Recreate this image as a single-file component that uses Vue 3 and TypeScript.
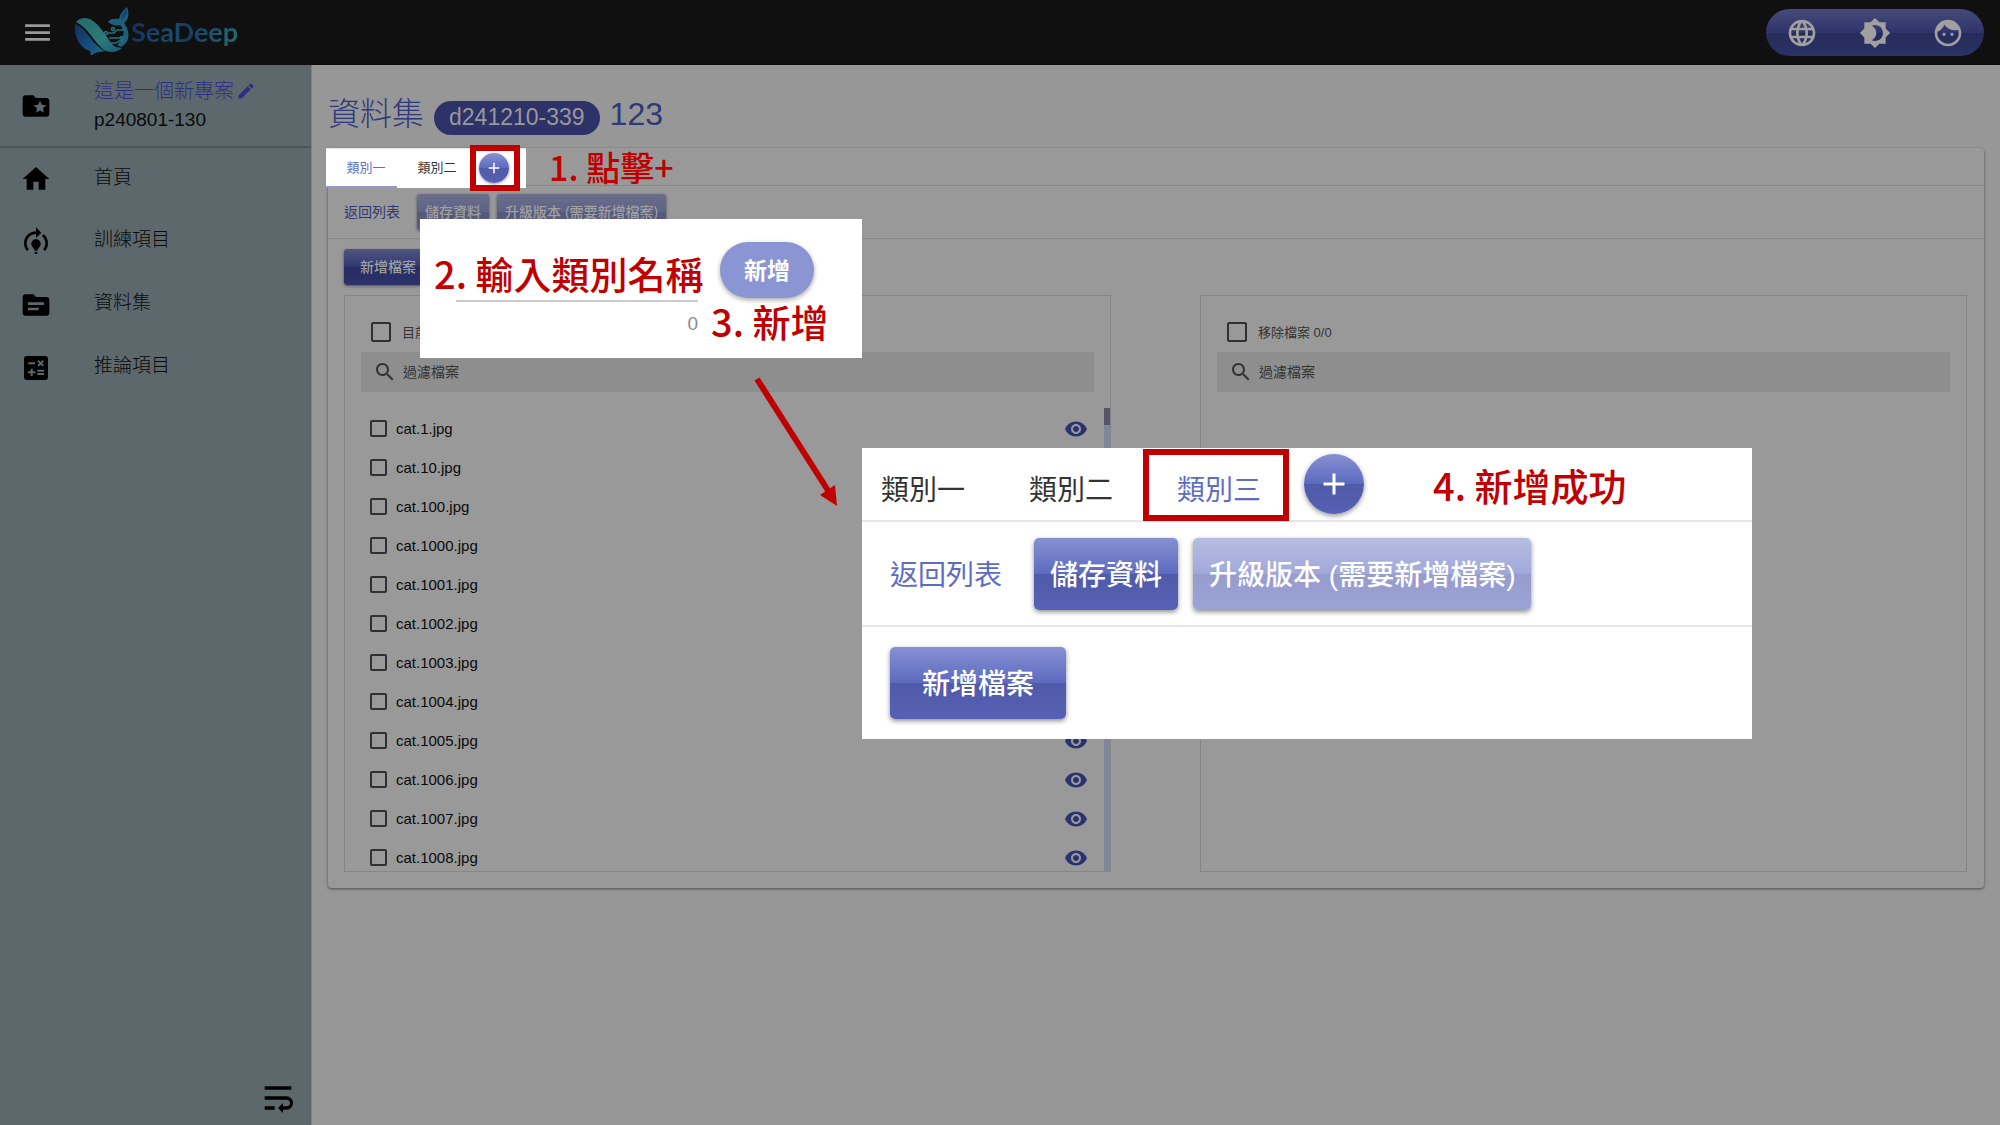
<script setup lang="ts">
import { ref } from 'vue'

interface NavItem {
  label: string
  icon: string
}

const folderPath = 'M20 6h-8l-2-2H4c-1.1 0-1.99.9-1.99 2L2 18c0 1.1.9 2 2 2h16c1.1 0 2-.9 2-2V8c0-1.1-.9-2-2-2z'

const icons = {
  menu: 'M3 18h18v-2H3v2zm0-5h18v-2H3v2zm0-7v2h18V6H3z',
  project: folderPath + 'm-2.06 11L15 15.28 12.06 17l.78-3.33-2.59-2.24 3.41-.29L15 8l1.34 3.14 3.41.29-2.59 2.24.78 3.33z',
  edit: 'M3 17.25V21h3.75L17.81 9.94l-3.75-3.75L3 17.25zM20.71 7.04c.39-.39.39-1.02 0-1.41l-2.34-2.34c-.39-.39-1.02-.39-1.41 0l-1.83 1.83 3.75 3.75 1.83-1.83z',
  language: 'M11.99 2C6.47 2 2 6.48 2 12s4.47 10 9.99 10C17.52 22 22 17.52 22 12S17.52 2 11.99 2zm6.93 6h-2.95c-.32-1.25-.78-2.45-1.38-3.56 1.84.63 3.37 1.91 4.33 3.56zM12 4.04c.83 1.2 1.48 2.53 1.91 3.96h-3.82c.43-1.43 1.08-2.76 1.91-3.96zM4.26 14C4.1 13.36 4 12.69 4 12s.1-1.36.26-2h3.38c-.08.66-.14 1.32-.14 2 0 .68.06 1.34.14 2H4.26zm.82 2h2.95c.32 1.25.78 2.45 1.38 3.56-1.84-.63-3.37-1.9-4.33-3.56zm2.95-8H5.08c.96-1.66 2.49-2.93 4.33-3.56C8.81 5.55 8.35 6.75 8.03 8zM12 19.96c-.83-1.2-1.48-2.53-1.91-3.96h3.82c-.43 1.43-1.08 2.76-1.91 3.96zM14.34 14H9.66c-.09-.66-.16-1.32-.16-2 0-.68.07-1.35.16-2h4.68c.09.65.16 1.32.16 2 0 .68-.07 1.34-.16 2zm.25 5.56c.6-1.11 1.06-2.31 1.38-3.56h2.95c-.96 1.65-2.49 2.93-4.33 3.56zM16.36 14c.08-.66.14-1.32.14-2 0-.68-.06-1.34-.14-2h3.38c.16.64.26 1.31.26 2s-.1 1.36-.26 2h-3.38z',
  theme: 'M20 8.69V4h-4.69L12 .69 8.69 4H4v4.69L.69 12 4 15.31V20h4.69L12 23.31 15.31 20H20v-4.69L23.31 12 20 8.69zM12 18c-.89 0-1.74-.2-2.5-.55C11.56 16.5 13 14.42 13 12s-1.44-4.5-3.5-5.45C10.26 6.2 11.11 6 12 6c3.31 0 6 2.69 6 6s-2.69 6-6 6z',
  face: 'M9 11.75c-.69 0-1.25.56-1.25 1.25s.56 1.25 1.25 1.25 1.25-.56 1.25-1.25-.56-1.25-1.25-1.25zm6 0c-.69 0-1.25.56-1.25 1.25s.56 1.25 1.25 1.25 1.25-.56 1.25-1.25-.56-1.25-1.25-1.25zM12 2C6.48 2 2 6.48 2 12s4.48 10 10 10 10-4.48 10-10S17.52 2 12 2zm0 18c-4.41 0-8-3.59-8-8 0-.29.02-.58.05-.86 2.36-1.05 4.23-2.98 5.21-5.37C11.07 8.33 14.05 10 17.42 10c.78 0 1.53-.09 2.25-.26.21.71.33 1.47.33 2.26 0 4.41-3.59 8-8 8z',
  eye: 'M12 4.5C7 4.5 2.73 7.61 1 12c1.73 4.39 6 7.5 11 7.5s9.27-3.11 11-7.5c-1.73-4.39-6-7.5-11-7.5zM12 17c-2.76 0-5-2.24-5-5s2.24-5 5-5 5 2.24 5 5-2.24 5-5 5zm0-8c-1.66 0-3 1.34-3 3s1.34 3 3 3 3-1.34 3-3-1.34-3-3-3z',
  search: 'M15.5 14h-.79l-.28-.27C15.41 12.59 16 11.11 16 9.5 16 5.91 13.09 3 9.5 3S3 5.91 3 9.5 5.91 16 9.5 16c1.61 0 3.09-.59 4.23-1.57l.27.28v.79l5 4.99L20.49 19l-4.99-5zm-6 0C7.01 14 5 11.99 5 9.5S7.01 5 9.5 5 14 7.01 14 9.5 11.99 14 9.5 14z',
  collapse: 'M4 19h6v-2H4v2zM20 5H4v2h16V5zm-3 6H4v2h13.25c1.1 0 2 .9 2 2s-.9 2-2 2H15v-2l-3 3 3 3v-2h2c2.21 0 4-1.79 4-4s-1.79-4-4-4z',
  plus: 'M19 13h-6v6h-2v-6H5v-2h6V5h2v6h6v2z',
}

const navItems: NavItem[] = [
  { label: '首頁', icon: 'M10 20v-6h4v6h5v-8h3L12 3 2 12h3v8z' },
  {
    label: '訓練項目',
    icon: 'M15.5 13.5c0 2-2.5 3.5-2.5 5h-2c0-1.5-2.5-3-2.5-5 0-1.93 1.57-3.5 3.5-3.5s3.5 1.57 3.5 3.5zm-2.5 6h-2V21h2v-1.5zm6-6.5c0 1.68-.59 3.21-1.58 4.42l1.42 1.42C20.18 17.27 21 15.23 21 13c0-2.74-1.23-5.19-3.16-6.84l-1.42 1.42C17.99 8.86 19 10.82 19 13zm-3-8l-4-4v3c-4.97 0-9 4.03-9 9 0 2.23.82 4.27 2.16 5.84l1.42-1.42C5.59 16.21 5 14.68 5 13c0-3.86 3.14-7 7-7v3l4-4z',
  },
  { label: '資料集', icon: folderPath + 'm-6 10H6v-2h8v2zm4-4H6v-2h12v2z' },
  {
    label: '推論項目',
    icon: 'M19 3H5c-1.1 0-2 .9-2 2v14c0 1.1.9 2 2 2h14c1.1 0 2-.9 2-2V5c0-1.1-.9-2-2-2zm-5.97 4.06L14.09 6l1.41 1.41L16.91 6l1.06 1.06-1.41 1.41 1.41 1.41-1.06 1.06-1.41-1.4-1.41 1.41-1.06-1.06 1.41-1.41-1.41-1.42zm-6.78.66h5v1.5h-5v-1.5zM11.5 16h-2v2H8v-2H6v-1.5h2v-2h1.5v2h2V16zm6.5 1.25h-5v-1.5h5v1.5zm0-2.5h-5v-1.5h5v1.5z',
  },
]

const files: string[] = [1, 10, 100, 1000, 1001, 1002, 1003, 1004, 1005, 1006, 1007, 1008].map((n) => `cat.${n}.jpg`)
const picked = ref<string[]>([])
const newCategory = ref('')
</script>

<template>
  <div class="app">
    <header class="topbar">
      <button class="icon-btn menu" type="button" aria-label="選單">
        <svg viewBox="0 0 24 24"><path :d="icons.menu" /></svg>
      </button>
      <a class="logo" href="#">
        <svg class="whale" viewBox="0 0 56 50" aria-hidden="true">
          <defs>
            <linearGradient id="back" x1="0" y1="0" x2="1" y2="1">
              <stop offset="0" stop-color="#24696d" />
              <stop offset="0.6" stop-color="#2b7a78" />
              <stop offset="1" stop-color="#1a5878" />
            </linearGradient>
            <linearGradient id="belly" x1="0" y1="0" x2="1" y2="1">
              <stop offset="0" stop-color="#12305f" />
              <stop offset="0.6" stop-color="#174e7f" />
              <stop offset="1" stop-color="#22707f" />
            </linearGradient>
          </defs>
          <path fill="url(#back)" d="M1 17C5 12 13 12 18 16c9 6 14 18 21 25 3 2 5 1 8 2-4 4-11 5-16 3C21 41 15 24 1 17z" />
          <path fill="url(#belly)" d="M0 19c12 4 17 21 30 27-4 1-7 1-10 2l-4 3-1-5C4 43-1 31 0 19z" />
          <path fill="#1c6079" d="M33 17c1-3 6-4 11-3 1-5 4-9 8-12 3 7 1 13-3 16 6 8 7 19-3 24l-4-2c7-7 9-13 3-20-5 1-8 0-12-3z" />
          <path fill="#164476" d="M46 15c0-5 2-9 6-12 1 5 0 9-6 12z" />
          <g fill="none" stroke="#23717d" stroke-width="1.500">
            <path d="M32 28h7l3-3h6M34 33h13M36 38h5l3-2h4" />
            <circle cx="31" cy="28" r="1.500" /><circle cx="47" cy="33" r="1.500" /><circle cx="38" cy="24" r="1.500" />
          </g>
        </svg>
        <span class="brand">SeaDeep</span>
      </a>
      <div class="tools">
        <button class="icon-btn" type="button" aria-label="語言"><svg viewBox="0 0 24 24"><path :d="icons.language" /></svg></button>
        <button class="icon-btn" type="button" aria-label="主題"><svg viewBox="0 0 24 24"><path :d="icons.theme" /></svg></button>
        <button class="icon-btn" type="button" aria-label="帳號"><svg viewBox="0 0 24 24"><path :d="icons.face" /></svg></button>
      </div>
    </header>

    <div class="body">
      <aside class="sidebar">
        <div class="project">
          <svg class="side-icon" viewBox="0 0 24 24"><path :d="icons.project" /></svg>
          <div class="project-text">
            <a class="project-name" href="#">這是一個新專案<svg viewBox="0 0 24 24"><path :d="icons.edit" /></svg></a>
            <span class="project-id">p240801-130</span>
          </div>
        </div>
        <nav>
          <a v-for="item in navItems" :key="item.label" class="nav-item" href="#">
            <svg class="side-icon" viewBox="0 0 24 24"><path :d="item.icon" /></svg>
            <span>{{ item.label }}</span>
          </a>
        </nav>
        <button class="icon-btn collapse" type="button" aria-label="收合">
          <svg viewBox="0 0 24 24"><path :d="icons.collapse" /></svg>
        </button>
      </aside>

      <main class="main">
        <h1 class="title">
          <span>資料集</span>
          <span class="chip">d241210-339</span>
          <span>123</span>
        </h1>

        <section class="card">
          <div class="tab-row">
            <div class="tabs spotlight" role="tablist">
              <button class="tab active" type="button" role="tab" aria-selected="true">類別一</button>
              <button class="tab" type="button" role="tab" aria-selected="false">類別二</button>
              <span class="add-wrap">
                <button class="round" type="button" aria-label="新增類別"><svg viewBox="0 0 24 24"><path :d="icons.plus" /></svg></button>
              </span>
            </div>
          </div>

          <div class="action-row">
            <a class="back" href="#">返回列表</a>
            <button class="btn dim-disabled" type="button" disabled>儲存資料</button>
            <button class="btn dim-disabled" type="button" disabled>升級版本 (需要新增檔案)</button>
          </div>

          <div class="content">
            <button class="btn dim wide" type="button">新增檔案</button>
            <div class="panels">
              <div class="panel">
                <label class="panel-head"><input class="check big" type="checkbox" /><span>目前檔案</span></label>
                <label class="search">
                  <svg viewBox="0 0 24 24"><path :d="icons.search" /></svg>
                  <input type="text" placeholder="過濾檔案" aria-label="過濾檔案" />
                </label>
                <div class="list-wrap">
                  <ul class="list">
                    <li v-for="file in files" :key="file">
                      <label><input v-model="picked" class="check" type="checkbox" :value="file" />{{ file }}</label>
                      <button class="icon-btn eye" type="button" :aria-label="`檢視 ${file}`">
                        <svg viewBox="0 0 24 24"><path :d="icons.eye" /></svg>
                      </button>
                    </li>
                  </ul>
                  <div class="scrollbar"><div class="thumb"></div></div>
                </div>
              </div>
              <div class="panel">
                <label class="panel-head"><input class="check big" type="checkbox" /><span>移除檔案 0/0</span></label>
                <label class="search">
                  <svg viewBox="0 0 24 24"><path :d="icons.search" /></svg>
                  <input type="text" placeholder="過濾檔案" aria-label="過濾檔案" />
                </label>
              </div>
            </div>
          </div>
        </section>
      </main>
    </div>

    <!-- Tutorial callouts floating over the dimmed page -->
    <p class="note note-1">1. 點擊+</p>

    <section class="popup">
      <div class="field">
        <input v-model="newCategory" type="text" aria-label="類別名稱" />
        <span class="count">{{ newCategory.length }}</span>
      </div>
      <button class="add-btn" type="button">新增</button>
      <p class="note note-2">2. 輸入類別名稱</p>
      <p class="note note-3">3. 新增</p>
    </section>

    <svg class="arrow" viewBox="0 0 90 132" aria-hidden="true">
      <path d="M4 4 76 117" fill="none" stroke="#c00000" stroke-width="6" />
      <path d="M84 131 67 120 82 110z" fill="#c00000" />
    </svg>

    <section class="result">
      <div class="result-tabs" role="tablist">
        <button class="tab" type="button" role="tab" aria-selected="false">類別一</button>
        <button class="tab" type="button" role="tab" aria-selected="false">類別二</button>
        <button class="tab active framed" type="button" role="tab" aria-selected="true">類別三</button>
        <button class="round" type="button" aria-label="新增類別"><svg viewBox="0 0 24 24"><path :d="icons.plus" /></svg></button>
        <p class="note note-4">4. 新增成功</p>
      </div>
      <div class="result-actions">
        <a class="back" href="#">返回列表</a>
        <button class="btn" type="button">儲存資料</button>
        <button class="btn faded" type="button" disabled>升級版本 (需要新增檔案)</button>
      </div>
      <div class="result-files">
        <button class="btn wide" type="button">新增檔案</button>
      </div>
    </section>
  </div>
</template>

<style>
body {
  margin: 0;
  background: #979797;
}
</style>

<style scoped>
.app {
  position: relative;
  display: flex;
  flex-direction: column;
  min-height: 100vh;
  overflow: hidden;
  background: #979797;
  font-family: "Liberation Sans", "Noto Sans CJK TC", sans-serif;
  color: #0a0a0a;
}
.app * {
  box-sizing: border-box;
}
svg {
  display: block;
  flex: none;
}
button,
input {
  font-family: inherit;
  margin: 0;
}
button {
  padding: 0;
  border: 0;
  background: none;
  white-space: nowrap;
}
a {
  color: inherit;
  text-decoration: none;
}
.icon-btn svg {
  width: 32px;
  height: 32px;
  fill: currentColor;
}

/* Top bar */
.topbar {
  display: flex;
  align-items: center;
  height: 65px;
  padding: 0 16px 0 21px;
  background: #101010;
}
.menu {
  color: #999;
}
.menu svg {
  width: 33px;
  height: 33px;
}
.logo {
  display: flex;
  align-items: center;
  margin-left: 21px;
}
.whale {
  width: 56px;
  height: 50px;
  margin-bottom: 6px;
}
.brand {
  padding-bottom: 2px;
  font-family: Lato, sans-serif;
  font-size: 27px;
  line-height: 36px;
  font-weight: 700;
  background: linear-gradient(90deg, #142f60, #17506a 40%, #153a66 50%, #1a4e6c 70%, #24696c);
  -webkit-background-clip: text;
  background-clip: text;
  color: transparent;
}
.tools {
  display: flex;
  align-items: center;
  gap: 41px;
  height: 47px;
  margin-left: auto;
  padding: 0 20px;
  border-radius: 24px;
  background: linear-gradient(#454a79, #2f356b 50%, #262c59 50%, #2b3266);
}
.tools .icon-btn {
  color: #a0a0a0;
}

/* Sidebar */
.body {
  display: flex;
  flex: 1;
}
.sidebar {
  display: flex;
  flex-direction: column;
  width: 312px;
  flex: none;
  border-right: 1px solid #7d8285;
  background: #5d686d;
}
.side-icon {
  width: 32px;
  height: 32px;
  fill: #000;
}
.project {
  display: flex;
  align-items: center;
  gap: 42px;
  height: 83px;
  padding-left: 20px;
  border-bottom: 2px solid #4c575c;
}
.project-text {
  display: flex;
  flex-direction: column;
  gap: 1px;
  font-size: 19px;
  line-height: 28px;
}
.project-name {
  display: flex;
  align-items: center;
  gap: 2px;
  font-size: 20px;
  font-weight: 300;
  color: #2b3084;
}
.project-name svg {
  width: 20px;
  height: 20px;
  fill: currentColor;
}
.nav-item {
  display: flex;
  align-items: center;
  gap: 42px;
  height: 63px;
  padding-left: 20px;
  font-size: 19px;
  font-weight: 300;
  line-height: 28px;
}
.nav-item:first-child {
  height: 62px;
}
.nav-item span {
  padding-bottom: 3px;
}
.collapse {
  align-self: flex-end;
  margin: auto 13px 7px 0;
}
.collapse svg {
  width: 40px;
  height: 40px;
}

/* Page title */
.main {
  flex: 1;
  min-width: 0;
  padding: 25px 16px 40px;
}
.title {
  display: flex;
  align-items: center;
  gap: 10px;
  height: 48px;
  margin: 0 0 10px;
  font-size: 32px;
  line-height: 48px;
  font-weight: 300;
  color: #2f3878;
}
.chip {
  height: 34px;
  margin-top: 8px;
  padding: 0 15px;
  border-radius: 17px;
  background: #2d3268;
  color: #999;
  font-size: 23px;
  line-height: 32px;
}

/* Card */
.card {
  border-radius: 4px;
  background: #999;
  box-shadow: 0 1px 3px rgba(0, 0, 0, 0.5);
}
.tab-row {
  height: 38px;
  border-bottom: 1px solid #888;
}
.tabs {
  position: relative;
  display: flex;
  width: 200px;
  height: 40px;
  margin-left: -2px;
}
.spotlight {
  background: #fff;
  border-top: 1px solid #e4e4e4;
}
.tab {
  width: 71px;
  padding: 0 0 2px 9px;
  font-size: 13px;
  line-height: 20px;
  color: #333;
}
.tab.active {
  padding-bottom: 0;
  border-bottom: 2px solid #8f98d4;
  color: #5f6cc4;
}
.add-wrap {
  display: flex;
  align-items: center;
  justify-content: center;
  width: 50px;
  height: 46px;
  margin: -4px 0 0 2px;
  padding-right: 2px;
  border: 6px solid #c00000;
}
.round {
  display: flex;
  align-items: center;
  justify-content: center;
  flex: none;
  width: 30px;
  height: 30px;
  border-radius: 50%;
  background: linear-gradient(#8790d2, #5c6bc0 50%, #4f5aa8 50%, #5661b6);
  box-shadow: 0 1px 3px rgba(0, 0, 0, 0.4);
}
.round svg {
  width: 18px;
  height: 18px;
  fill: #fff;
}
.action-row {
  display: flex;
  align-items: center;
  gap: 8px;
  height: 53px;
  padding: 0 16px;
  border-bottom: 1px solid #888;
  font-size: 14px;
}
.back {
  margin-right: 9px;
  padding-bottom: 2px;
  color: #2f3878;
  white-space: nowrap;
}
.btn {
  height: 36px;
  padding: 0 8px 2px;
  border-radius: 3px;
  background: linear-gradient(#8790d2, #5c6bc0 50%, #4f5aa8 50%, #5661b6);
  box-shadow: 0 1px 3px rgba(0, 0, 0, 0.5);
  color: #fff;
  font-size: 14px;
  font-weight: 500;
}
.btn.wide {
  padding: 0 16px 2px;
}
.btn.dim {
  background: linear-gradient(#50567e, #2f3772 50%, #272d60 50%, #2c336c);
  color: #a0a0a0;
}
.btn.dim-disabled {
  background: linear-gradient(#6b6f88, #5c6288 50%, #54597b 50%, #5a5f83);
  color: #a0a0a0;
}
.content {
  padding: 10px 17px 16px 16px;
}
.panels {
  display: flex;
  gap: 89px;
  margin-top: 10px;
}
.panel {
  flex: 1;
  min-width: 0;
  padding-top: 26px;
  border: 1px solid #868686;
}
.panel-head {
  display: flex;
  align-items: center;
  gap: 11px;
  height: 20px;
  margin: 0 26px 10px;
  font-size: 13px;
  color: #333;
}
.panel-head span {
  padding-bottom: 2px;
}
.check {
  appearance: none;
  flex: none;
  width: 17px;
  height: 17px;
  border: 2px solid #303030;
  border-radius: 2px;
}
.check.big {
  width: 20px;
  height: 20px;
}
.search {
  display: flex;
  align-items: center;
  gap: 6px;
  height: 40px;
  margin: 0 16px;
  padding: 0 12px;
  background: #8e8e8e;
}
.search svg {
  width: 24px;
  height: 24px;
  fill: #333;
}
.search input {
  flex: 1;
  min-width: 0;
  padding: 0;
  border: 0;
  outline: 0;
  background: none;
  font-size: 14px;
}
.search input::placeholder {
  color: #333;
  opacity: 1;
}
.list-wrap {
  display: flex;
  height: 463px;
  margin-top: 16px;
  overflow: hidden;
}
.list {
  flex: 1;
  margin: 0;
  padding: 1px 16px 0 25px;
  list-style: none;
}
.list li {
  display: flex;
  align-items: center;
  justify-content: space-between;
  height: 39px;
  font-size: 15px;
}
.list label {
  display: flex;
  align-items: center;
  gap: 9px;
}
.eye {
  color: #2b3270;
}
.eye svg {
  width: 24px;
  height: 24px;
}
.scrollbar {
  width: 6px;
  background: #83859a;
}
.thumb {
  height: 17px;
  background: #555468;
}

/* Callouts */
.note {
  position: absolute;
  margin: 0;
  font-family: "Noto Sans CJK TC", sans-serif;
  font-size: 38px;
  line-height: 48px;
  font-weight: 500;
  color: #c00000;
  white-space: nowrap;
}
.note-1 {
  left: 549px;
  top: 143px;
  font-size: 34px;
}
.popup {
  position: absolute;
  left: 420px;
  top: 219px;
  display: flex;
  align-items: flex-start;
  gap: 22px;
  width: 442px;
  height: 139px;
  padding: 23px 36px;
  background: #fff;
}
.field {
  width: 242px;
}
.field input {
  display: block;
  width: 100%;
  height: 60px;
  padding: 0;
  border: 0;
  border-bottom: 2px solid #ccc;
  outline: 0;
  background: none;
  font-size: 28px;
}
.count {
  display: block;
  margin-top: 10px;
  font-size: 19px;
  line-height: 24px;
  text-align: right;
  color: #8c8c8c;
}
.add-btn {
  width: 94px;
  height: 56px;
  padding-bottom: 2px;
  border-radius: 28px;
  background: #8c95d3;
  box-shadow: 0 2px 5px rgba(0, 0, 0, 0.35);
  color: #fff;
  font-size: 23px;
  font-weight: 700;
}
.note-2 {
  left: 14px;
  top: 30px;
}
.note-3 {
  left: 291px;
  top: 78px;
}
.arrow {
  position: absolute;
  left: 753px;
  top: 375px;
  width: 90px;
  height: 132px;
}

/* Enlarged result */
.result {
  position: absolute;
  left: 862px;
  top: 448px;
  width: 890px;
  height: 291px;
  background: #fff;
}
.result-tabs {
  position: relative;
  display: flex;
  align-items: flex-start;
  height: 74px;
  border-bottom: 2px solid #e6e6e6;
}
.result .tab {
  width: 148px;
  height: 72px;
  margin-top: 1px;
  padding: 12px 26px 0 0;
  font-size: 28px;
  line-height: 36px;
}
.result .tab.framed {
  width: 146px;
  margin-left: -15px;
  padding: 12px 0 0 6px;
  border: 6px solid #c00000;
}
.result .round {
  width: 60px;
  height: 60px;
  margin: 6px 0 0 15px;
  box-shadow: 0 2px 5px rgba(0, 0, 0, 0.4);
}
.result .round svg {
  width: 36px;
  height: 36px;
}
.note-4 {
  left: 571px;
  top: 13px;
}
.result-actions {
  display: flex;
  align-items: center;
  gap: 15px;
  height: 105px;
  padding: 0 28px;
  border-bottom: 2px solid #e6e6e6;
  font-size: 28px;
}
.result .back {
  margin-right: 17px;
  color: #5f6cc4;
}
.result .btn {
  height: 72px;
  padding: 0 16px 2px;
  border-radius: 5px;
  box-shadow: 0 2px 5px rgba(0, 0, 0, 0.45);
  font-size: 28px;
}
.result .btn.faded {
  background: linear-gradient(#b6bde2, #9fa8da 50%, #969dcd 50%, #9ba3d5);
}
.result-files {
  padding: 20px 28px;
}
.result .btn.wide {
  padding: 0 32px 2px;
}
</style>
